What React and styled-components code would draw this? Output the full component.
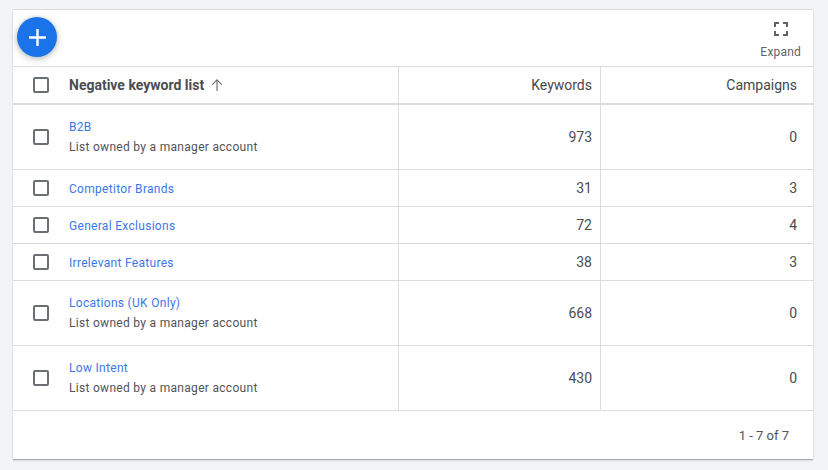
import React from "react";
import styled, { createGlobalStyle } from "styled-components";

const Global = createGlobalStyle`
  html, body { margin: 0; padding: 0; background: #f1f3f4; width: 828px; height: 470px; overflow: hidden; }
  * { box-sizing: border-box; }
`;

const Page = styled.div`
  padding: 9px 15px 0 13px;
  font-family: Roboto, "Liberation Sans", sans-serif;
  color: #3c4043;
`;

const Card = styled.div`
  width: 800px;
  height: 450px;
  background: #fff;
  border-top: 1px solid #dadce0;
  box-shadow: 0 1px 1px rgba(60, 64, 67, 0.35), 0 2px 2px rgba(60, 64, 67, 0.08);
  display: flex;
  flex-direction: column;
`;

const Toolbar = styled.div`
  height: 56px;
  display: flex;
  justify-content: space-between;
  padding: 7px 12px 0 4px;
`;

const Fab = styled.button`
  width: 40px;
  height: 40px;
  border: 0;
  padding: 0;
  border-radius: 50%;
  background: #1a73e8;
  display: flex;
  align-items: center;
  justify-content: center;
  box-shadow: 0 1px 3px 1px rgba(60, 64, 67, 0.15), 0 2px 6px 2px rgba(60, 64, 67, 0.15);
`;

const ExpandButton = styled.div`
  display: flex;
  flex-direction: column;
  align-items: center;
  gap: 9px;
  padding-top: 5px;
  font-size: 12px;
  line-height: 14px;
  letter-spacing: 0.2px;
  color: #5f6368;
`;

const Row = styled.div`
  display: grid;
  grid-template-columns: 385px 202px 213px;
  height: ${(p) => p.$h}px;
  border-top: ${(p) => (p.$first ? "0" : "1px solid #dadce0")};
  border-bottom: ${(p) => (p.$head ? "2px solid #dadce0" : "0")};
`;

const Cell = styled.div`
  display: flex;
  align-items: center;
  min-width: 0;
  font-size: 14px;
  color: ${(p) => (p.$head ? "#44484c" : "#4a4e52")};
  padding-right: ${(p) => (p.$last ? "16px" : "8px")};
  justify-content: flex-end;
  border-left: 1px solid #dadce0;
`;

const NameCell = styled.div`
  display: flex;
  align-items: center;
  min-width: 0;
`;

const CheckSlot = styled.div`
  width: 56px;
  display: flex;
  justify-content: center;
`;

const Check = styled.span`
  display: block;
  width: 16px;
  height: 16px;
  border: 2px solid #6b6f73;
  border-radius: 2px;
`;

const HeadTitle = styled.div`
  display: flex;
  align-items: center;
  gap: 6px;
  font-size: 14px;
  font-weight: 700;
  color: #4a4e52;
`;

const Names = styled.div`
  display: flex;
  flex-direction: column;
  gap: 6px;
  padding-top: ${(p) => (p.$single ? "2px" : "0")};
`;

const NameLink = styled.a`
  font-size: 12px;
  line-height: 14px;
  letter-spacing: 0.3px;
  color: #3b78e7;
`;

const Owner = styled.div`
  font-size: 12px;
  line-height: 14px;
  letter-spacing: 0.3px;
  color: #50545a;
`;

const Footer = styled.div`
  flex: 1;
  border-top: 1px solid #dadce0;
  display: flex;
  align-items: center;
  justify-content: flex-end;
  padding: 0 24px 0 0;
  font-size: 13px;
  color: #50545a;
`;

const rows = [
  ["B2B", true, 973, 0],
  ["Competitor Brands", false, 31, 3],
  ["General Exclusions", false, 72, 4],
  ["Irrelevant Features", false, 38, 3],
  ["Locations (UK Only)", true, 668, 0],
  ["Low Intent", true, 430, 0],
];

export default function App() {
  return (
    <Page>
      <Global />
      <Card>
        <Toolbar>
          <Fab aria-label="Add">
            <svg width="29" height="29" viewBox="0 0 24 24" fill="#fff">
              <path d="M19 13h-6v6h-2v-6H5v-2h6V5h2v6h6z" />
            </svg>
          </Fab>
          <ExpandButton>
            <svg width="16" height="14" viewBox="0 0 16 14" fill="#5f6368">
              <path d="M1 0h5v2H3v3H1zM10 0h5v5h-2V2h-3zM1 9h2v3h3v2H1zM13 9h2v5h-5v-2h3z" />
            </svg>
            Expand
          </ExpandButton>
        </Toolbar>
        <Row $h={39} $head>
          <NameCell>
            <CheckSlot>
              <Check />
            </CheckSlot>
            <HeadTitle>
              Negative keyword list
              <svg width="14" height="14" viewBox="0 0 14 14" fill="#6f7478">
                <path d="M6.4 13V3.3L2.5 7.2 1.7 6.4 7 1l5.3 5.4-.8.8-3.9-3.9V13z" />
              </svg>
            </HeadTitle>
          </NameCell>
          <Cell $head>Keywords</Cell>
          <Cell $head $last>Campaigns</Cell>
        </Row>
        {rows.map(([name, owned, kw, camp], i) => (
          <Row key={name} $first={i === 0} $h={owned ? (i === 0 ? 64 : 65) : 37}>
            <NameCell>
              <CheckSlot>
                <Check />
              </CheckSlot>
              <Names $single={!owned}>
                <NameLink>{name}</NameLink>
                {owned && <Owner>List owned by a manager account</Owner>}
              </Names>
            </NameCell>
            <Cell>{kw}</Cell>
            <Cell $last>{camp}</Cell>
          </Row>
        ))}
        <Footer>1 - 7 of 7</Footer>
      </Card>
    </Page>
  );
}
